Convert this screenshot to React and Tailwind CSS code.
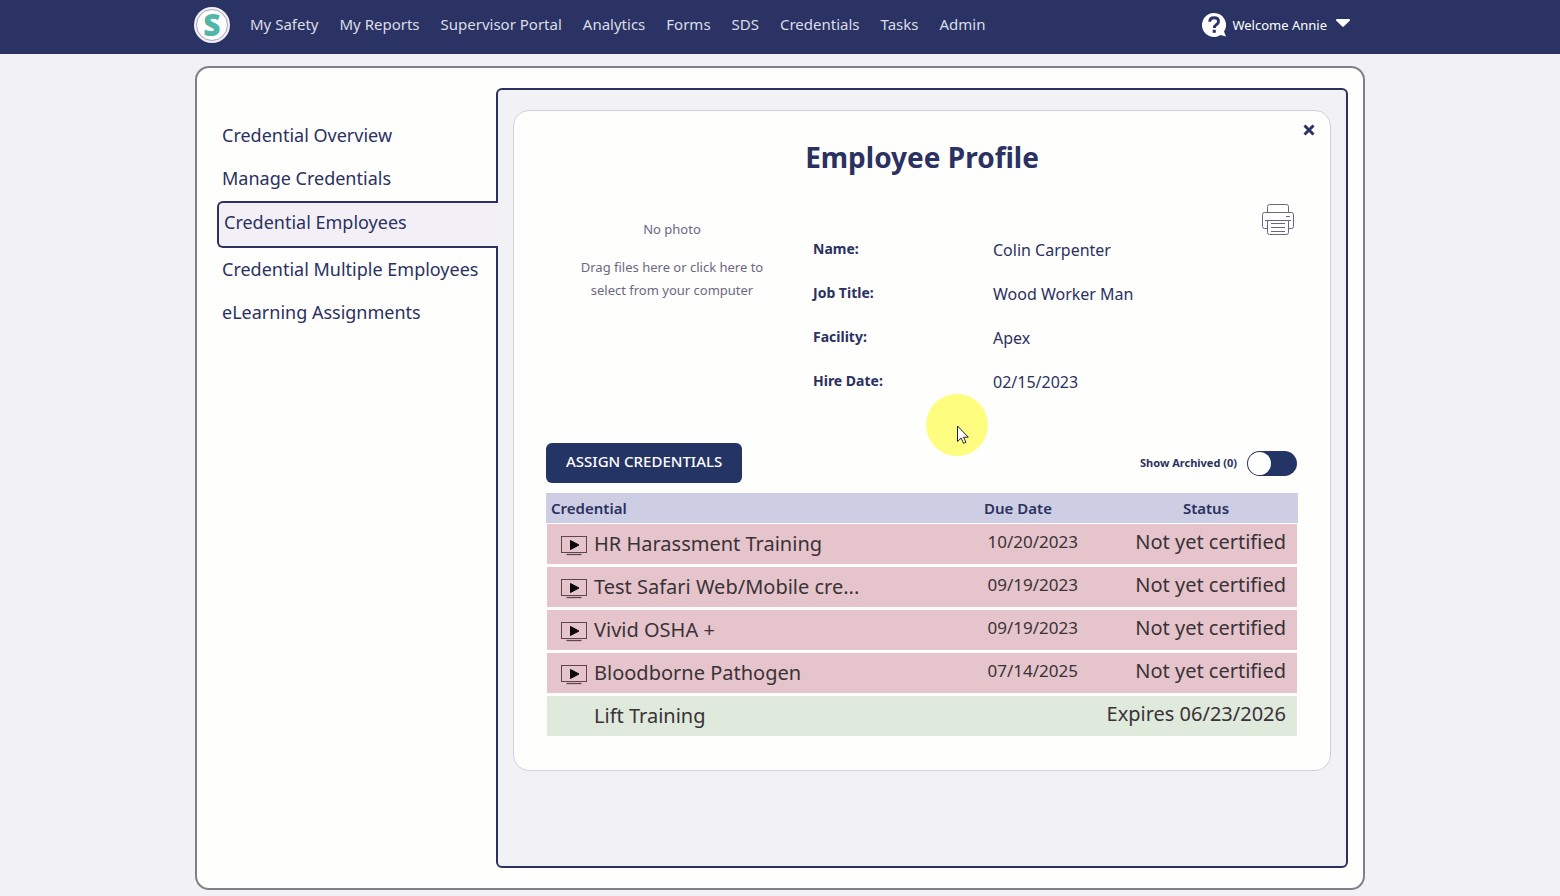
import React, { useState } from 'react';

const navLinks = ['My Safety', 'My Reports', 'Supervisor Portal', 'Analytics', 'Forms', 'SDS', 'Credentials', 'Tasks', 'Admin'];

const sideLinks = [
  'Credential Overview',
  'Manage Credentials',
  'Credential Employees',
  'Credential Multiple Employees',
  'eLearning Assignments',
];

const details = [
  { label: 'Name:', value: 'Colin Carpenter' },
  { label: 'Job Title:', value: 'Wood Worker Man' },
  { label: 'Facility:', value: 'Apex' },
  { label: 'Hire Date:', value: '02/15/2023' },
];

const credentials = [
  { name: 'HR Harassment Training', due: '10/20/2023', status: 'Not yet certified', video: true },
  { name: 'Test Safari Web/Mobile cre...', due: '09/19/2023', status: 'Not yet certified', video: true },
  { name: 'Vivid OSHA +', due: '09/19/2023', status: 'Not yet certified', video: true },
  { name: 'Bloodborne Pathogen', due: '07/14/2025', status: 'Not yet certified', video: true },
  { name: 'Lift Training', due: '', status: 'Expires 06/23/2026', video: false },
];

const HelpIcon = () => (
  <svg viewBox="0 0 24 24" className="h-6 w-6" aria-hidden="true">
    <path d="M12 0a12 12 0 1 0 6.600 22L24 23.600 22 18.600A12 12 0 0 0 12 0z" fill="#fff" />
    <path d="M7.700 8.800C7.800 6.200 9.600 4.800 12.100 4.800c2.500 0 4.400 1.400 4.400 3.700 0 3.200-4.200 3.200-4.200 6.400" fill="none" stroke="#2a3363" strokeWidth="2.900" />
    <rect x="10.700" y="16.800" width="3.100" height="3" fill="#2a3363" />
  </svg>
);

const PrinterIcon = () => (
  <svg viewBox="0 0 32 32" className="h-8 w-8" fill="none" stroke="#6b6680" strokeWidth="1" strokeLinejoin="round" aria-hidden="true">
    <path d="M5.500 8.500v-6a2 2 0 0 1 2-2h17a2 2 0 0 1 2 2v6" />
    <path d="M5.500 24.500h-3a2 2 0 0 1-2-2v-12a2 2 0 0 1 2-2h27a2 2 0 0 1 2 2v12a2 2 0 0 1-2 2h-3" />
    <path d="M5.500 16.500v12a2 2 0 0 0 2 2h17a2 2 0 0 0 2-2v-12" />
    <path d="M3 16.500h26M24 12.500h4M9 19.500h14M9 23.500h14M9 27.500h14" />
  </svg>
);

const VideoIcon = () => (
  <svg viewBox="0 0 26 20" className="mt-[3px] h-5 w-[26px] shrink-0" aria-hidden="true">
    <rect x="0.500" y="0.500" width="25" height="16" fill="none" stroke="#5d474c" />
    <path d="M5.500 18.500h15" stroke="#5d474c" strokeWidth="1.300" />
    <path d="M9.500 4.500v9l8.500-4.500z" fill="#0c0809" stroke="#0c0809" strokeLinejoin="round" />
  </svg>
);

const Header = () => (
  <header className="h-[54px] bg-[#2a3363]">
    <div className="mx-auto flex h-[50px] max-w-[1172px] items-center pr-4">
      <a href="#home" aria-label="Home" className="flex h-9 w-9 items-center justify-center rounded-full bg-[#f1f0f6]">
        <span className="flex h-8 w-8 items-center justify-center rounded-full border border-[#a9a4bb] bg-white text-[30px] leading-7 font-black text-[#52b5aa]">
          S
        </span>
      </a>
      <nav className="ml-5 flex gap-[21px] pb-[3px] text-[15px] leading-6 whitespace-nowrap text-[#dcdde8]">
        {navLinks.map(link => (
          <a key={link} href="#nav">{link}</a>
        ))}
      </nav>
      <button type="button" className="ml-auto flex items-center gap-[6px] text-[13px] leading-6 whitespace-nowrap text-white">
        <HelpIcon />
        <span>Welcome Annie</span>
        <svg viewBox="0 0 14 8" className="mb-1 ml-[3px] h-2 w-[14px]" aria-hidden="true">
          <path d="M1 0h12a1 1 0 0 1 .7 1.700L8 7.300a1.400 1.400 0 0 1-2 0L.3 1.700A1 1 0 0 1 1 0z" fill="#fff" />
        </svg>
      </button>
    </div>
  </header>
);

const Sidebar = () => (
  <nav className="flex w-[279px] shrink-0 flex-col pt-[26px] text-[18px] whitespace-nowrap">
    {sideLinks.map(link =>
      link === 'Credential Employees' ? (
        <a
          key={link}
          href="#side"
          aria-current="page"
          className="z-10 mt-px -mr-[2px] flex h-[47px] items-center rounded-l-md border-2 border-r-0 border-[#2b3160] bg-[#f2f0f6] pb-1 pl-[5px]"
        >
          {link}
        </a>
      ) : (
        <a key={link} href="#side" className="flex h-[43px] items-center pb-px pl-[5px]">{link}</a>
      )
    )}
  </nav>
);

const CredentialTable = () => (
  <table className="mt-[10px] w-full table-fixed border-separate border-spacing-0 text-[#3a3238]">
    <thead>
      <tr className="h-[30px] bg-[#cdcee3] text-[15px] leading-6 text-[#2b3160]">
        <th className="pl-[5px] text-left font-semibold">Credential</th>
        <th className="w-[176px] pl-4 text-center font-semibold">Due Date</th>
        <th className="w-[200px] pl-4 text-center font-semibold">Status</th>
      </tr>
    </thead>
    <tbody>
      {credentials.map(item => (
        <tr key={item.name} className={item.video ? 'bg-[#e5c5cb]' : 'bg-[#dfe9dc]'}>
          <td className="h-[43px] border-t border-b-2 border-l border-[#fefefd] p-0 pl-[14px]">
            <div className="flex items-center gap-[7px] text-[20px] leading-7 whitespace-nowrap">
              {item.video ? <VideoIcon /> : <span className="w-[26px]" />}
              {item.name}
            </div>
          </td>
          <td className="border-t border-b-2 border-[#fefefd] p-0 pr-5 pb-1 text-right text-[17px]">{item.due}</td>
          <td className="border-t border-r border-b-2 border-[#fefefd] p-0 pr-[11px] pb-1 text-right text-[20px] leading-7 whitespace-nowrap">
            {item.status}
          </td>
        </tr>
      ))}
    </tbody>
  </table>
);

const EmployeeProfile = () => {
  const [archived, setArchived] = useState(false);

  return (
    <section className="relative rounded-2xl border border-[#d3cfdd] bg-[#fefefd] px-8 pb-8">
      <div className="-mr-[18px] flex justify-end pt-3">
        <button type="button" aria-label="Close" className="p-px">
          <svg viewBox="0 0 12 12" className="h-3 w-3" aria-hidden="true">
            <path d="M1.500 1.500l9 9M10.500 1.500l-9 9" stroke="#2b3160" strokeWidth="2.900" />
          </svg>
        </button>
      </div>
      <h1 className="text-center text-[28px] leading-10 font-bold">Employee Profile</h1>

      <div className="mt-[27px] flex h-[239px] items-start">
        <label className="mt-[14px] flex w-[252px] cursor-pointer flex-col items-center gap-[15px] text-center text-[13px] leading-[23px] text-[#6c6883]">
          <span>No photo</span>
          <span className="px-8">Drag files here or click here to select from your computer</span>
          <input type="file" className="sr-only" />
        </label>
        <dl className="mt-[23px] ml-[15px] grid grow grid-cols-[180px_1fr]">
          {details.map(row => (
            <React.Fragment key={row.label}>
              <dt className="h-11 text-[14px] leading-[44px] font-bold">{row.label}</dt>
              <dd className="h-11 text-[16px] leading-[46px]">{row.value}</dd>
            </React.Fragment>
          ))}
        </dl>
        <button type="button" aria-label="Print" className="mr-1">
          <PrinterIcon />
        </button>
      </div>

      <div className="flex items-center justify-between">
        <button type="button" className="h-10 rounded-md bg-[#243464] px-5 pb-[3px] text-[15px] font-medium text-white">
          ASSIGN CREDENTIALS
        </button>
        <label className="flex cursor-pointer items-center gap-[10px] text-[11px] font-bold">
          <span>Show Archived (0)</span>
          <input
            type="checkbox"
            checked={archived}
            onChange={e => setArchived(e.target.checked)}
            className="mr-px h-[25px] w-[50px] appearance-none rounded-full bg-[#243464] p-px before:block before:h-[23px] before:w-[23px] before:rounded-full before:bg-white checked:before:ml-auto"
          />
        </label>
      </div>

      <CredentialTable />

      {/* pointer with click highlight */}
      <div className="pointer-events-none absolute top-[283px] left-[412px] h-[62px] w-[62px] rounded-full bg-[#fefd80]">
        <svg viewBox="0 0 12 19" className="mt-[31px] ml-[31px] h-[19px] w-3" aria-hidden="true">
          <path d="M.5 1v15.500l3.600-3.400 2.500 5.200 2.300-1-2.300-5.100h4.700z" fill="#fff" stroke="#222" strokeWidth="1" />
        </svg>
      </div>
    </section>
  );
};

const App = () => {
  return (
    <div className="flex min-h-screen flex-col bg-[#f2f1f4] font-['Noto_Sans',sans-serif] text-[#2b3160]">
      <Header />
      <main className="mx-auto mt-3 mb-[6px] flex w-full max-w-[1170px] grow rounded-[14px] border-2 border-[#827f88] bg-[#fefefd] py-5 pr-[15px] pl-5">
        <Sidebar />
        <div className="min-w-0 grow rounded-md border-2 border-[#2b3160] bg-[#f2f1f4] px-[15px] py-5">
          <EmployeeProfile />
        </div>
      </main>
    </div>
  );
};

export default App;
